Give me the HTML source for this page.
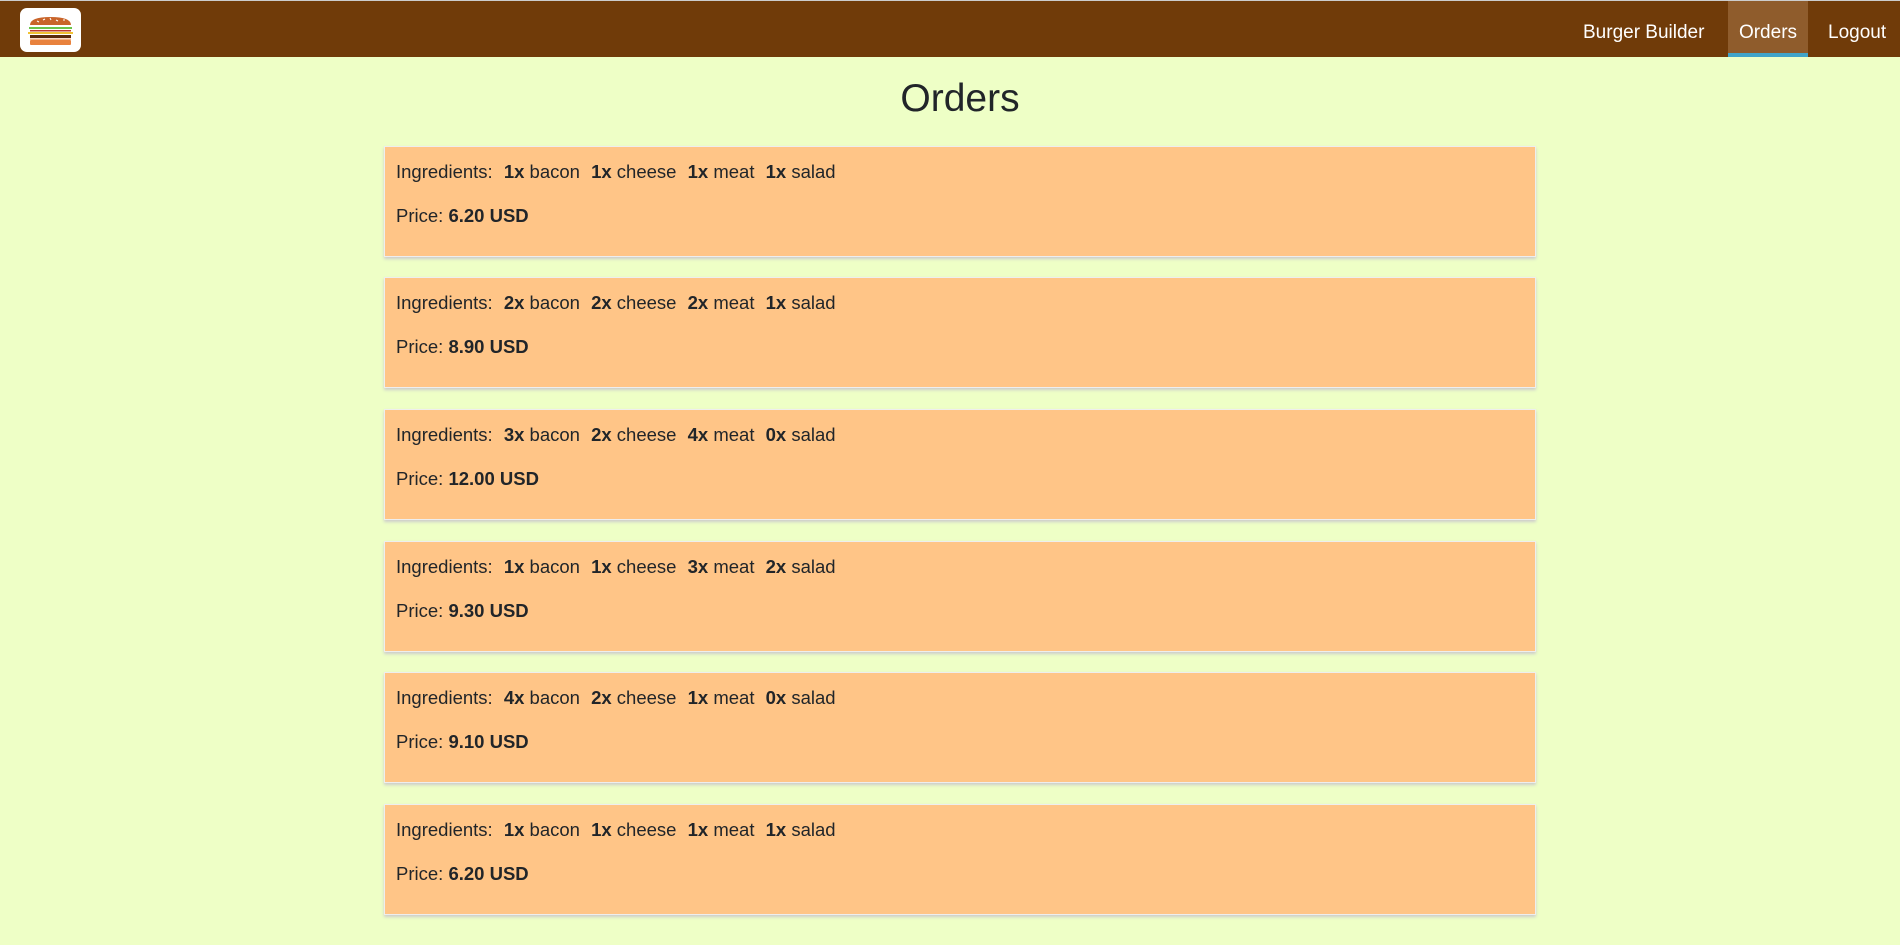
<!DOCTYPE html>
<html><head><meta charset="utf-8"><style>
*{box-sizing:border-box;margin:0;padding:0}
body{width:1900px;height:945px;background:#EEFFC6;font-family:"Liberation Sans",Arial,sans-serif;color:#212529;overflow:hidden;position:relative}
.bar{position:absolute;left:0;top:0;width:1900px;height:57px;background:#703B09;border-top:1px solid #ccc}
.logo{position:absolute;left:20px;top:7px;width:61px;height:44px;background:#fff;border-radius:7px}
.nav a{position:absolute;top:0;height:56px;line-height:40px;padding-top:12px;color:#fff;font-size:19px;text-decoration:none}
.act{background:#8F5C2C;border-bottom:4px solid #40A4C8;text-align:center}
h1{position:absolute;top:77px;left:0;width:1920px;text-align:center;font-weight:normal;font-size:39px;color:#212529}
.card{position:absolute;left:384px;width:1152px;height:111px;background:#FFC587;border:1px solid #eee;box-shadow:0 2px 3px #ccc;padding:14px 11px;font-size:18.5px}
.card p{line-height:22px}
.card p+p{margin-top:22px}
b{margin-left:6px}
</style></head><body>
<div class="bar">
<div class="logo"><svg width="61" height="44" viewBox="0 0 61 44">
<path d="M10 17 Q10 9 30.5 9 Q51 9 51 17 Z" fill="#C9642A"/>
<g stroke="#fff" stroke-width="1"><line x1="17" y1="13" x2="19" y2="14"/><line x1="23" y1="12" x2="25" y2="11"/><line x1="30" y1="10" x2="31" y2="12"/><line x1="36" y1="12" x2="38" y2="13"/><line x1="44" y1="13" x2="44" y2="11"/></g>
<rect x="9" y="19" width="43" height="2" fill="#6BC34A"/>
<rect x="10" y="22" width="41" height="1.5" fill="#C0392B"/>
<rect x="8" y="24" width="45" height="2" fill="#F1C232"/>
<rect x="10" y="27" width="41" height="3" fill="#5B2A0A"/>
<rect x="10" y="30.5" width="41" height="1.5" fill="#F4B183"/>
<rect x="10" y="32" width="41" height="5" rx="1" fill="#E8823D"/>
</svg></div>
<div class="nav">
<a style="left:1583px">Burger Builder</a>
<a class="act" style="left:1728px;width:80px">Orders</a>
<a style="left:1828px">Logout</a>
</div>
</div>
<h1>Orders</h1>
<div class="card" style="top:146px"><p>Ingredients: <b>1x</b> bacon <b>1x</b> cheese <b>1x</b> meat <b>1x</b> salad</p><p>Price: <strong>6.20 USD</strong></p></div>
<div class="card" style="top:277px"><p>Ingredients: <b>2x</b> bacon <b>2x</b> cheese <b>2x</b> meat <b>1x</b> salad</p><p>Price: <strong>8.90 USD</strong></p></div>
<div class="card" style="top:409px"><p>Ingredients: <b>3x</b> bacon <b>2x</b> cheese <b>4x</b> meat <b>0x</b> salad</p><p>Price: <strong>12.00 USD</strong></p></div>
<div class="card" style="top:541px"><p>Ingredients: <b>1x</b> bacon <b>1x</b> cheese <b>3x</b> meat <b>2x</b> salad</p><p>Price: <strong>9.30 USD</strong></p></div>
<div class="card" style="top:672px"><p>Ingredients: <b>4x</b> bacon <b>2x</b> cheese <b>1x</b> meat <b>0x</b> salad</p><p>Price: <strong>9.10 USD</strong></p></div>
<div class="card" style="top:804px"><p>Ingredients: <b>1x</b> bacon <b>1x</b> cheese <b>1x</b> meat <b>1x</b> salad</p><p>Price: <strong>6.20 USD</strong></p></div>
</body></html>
